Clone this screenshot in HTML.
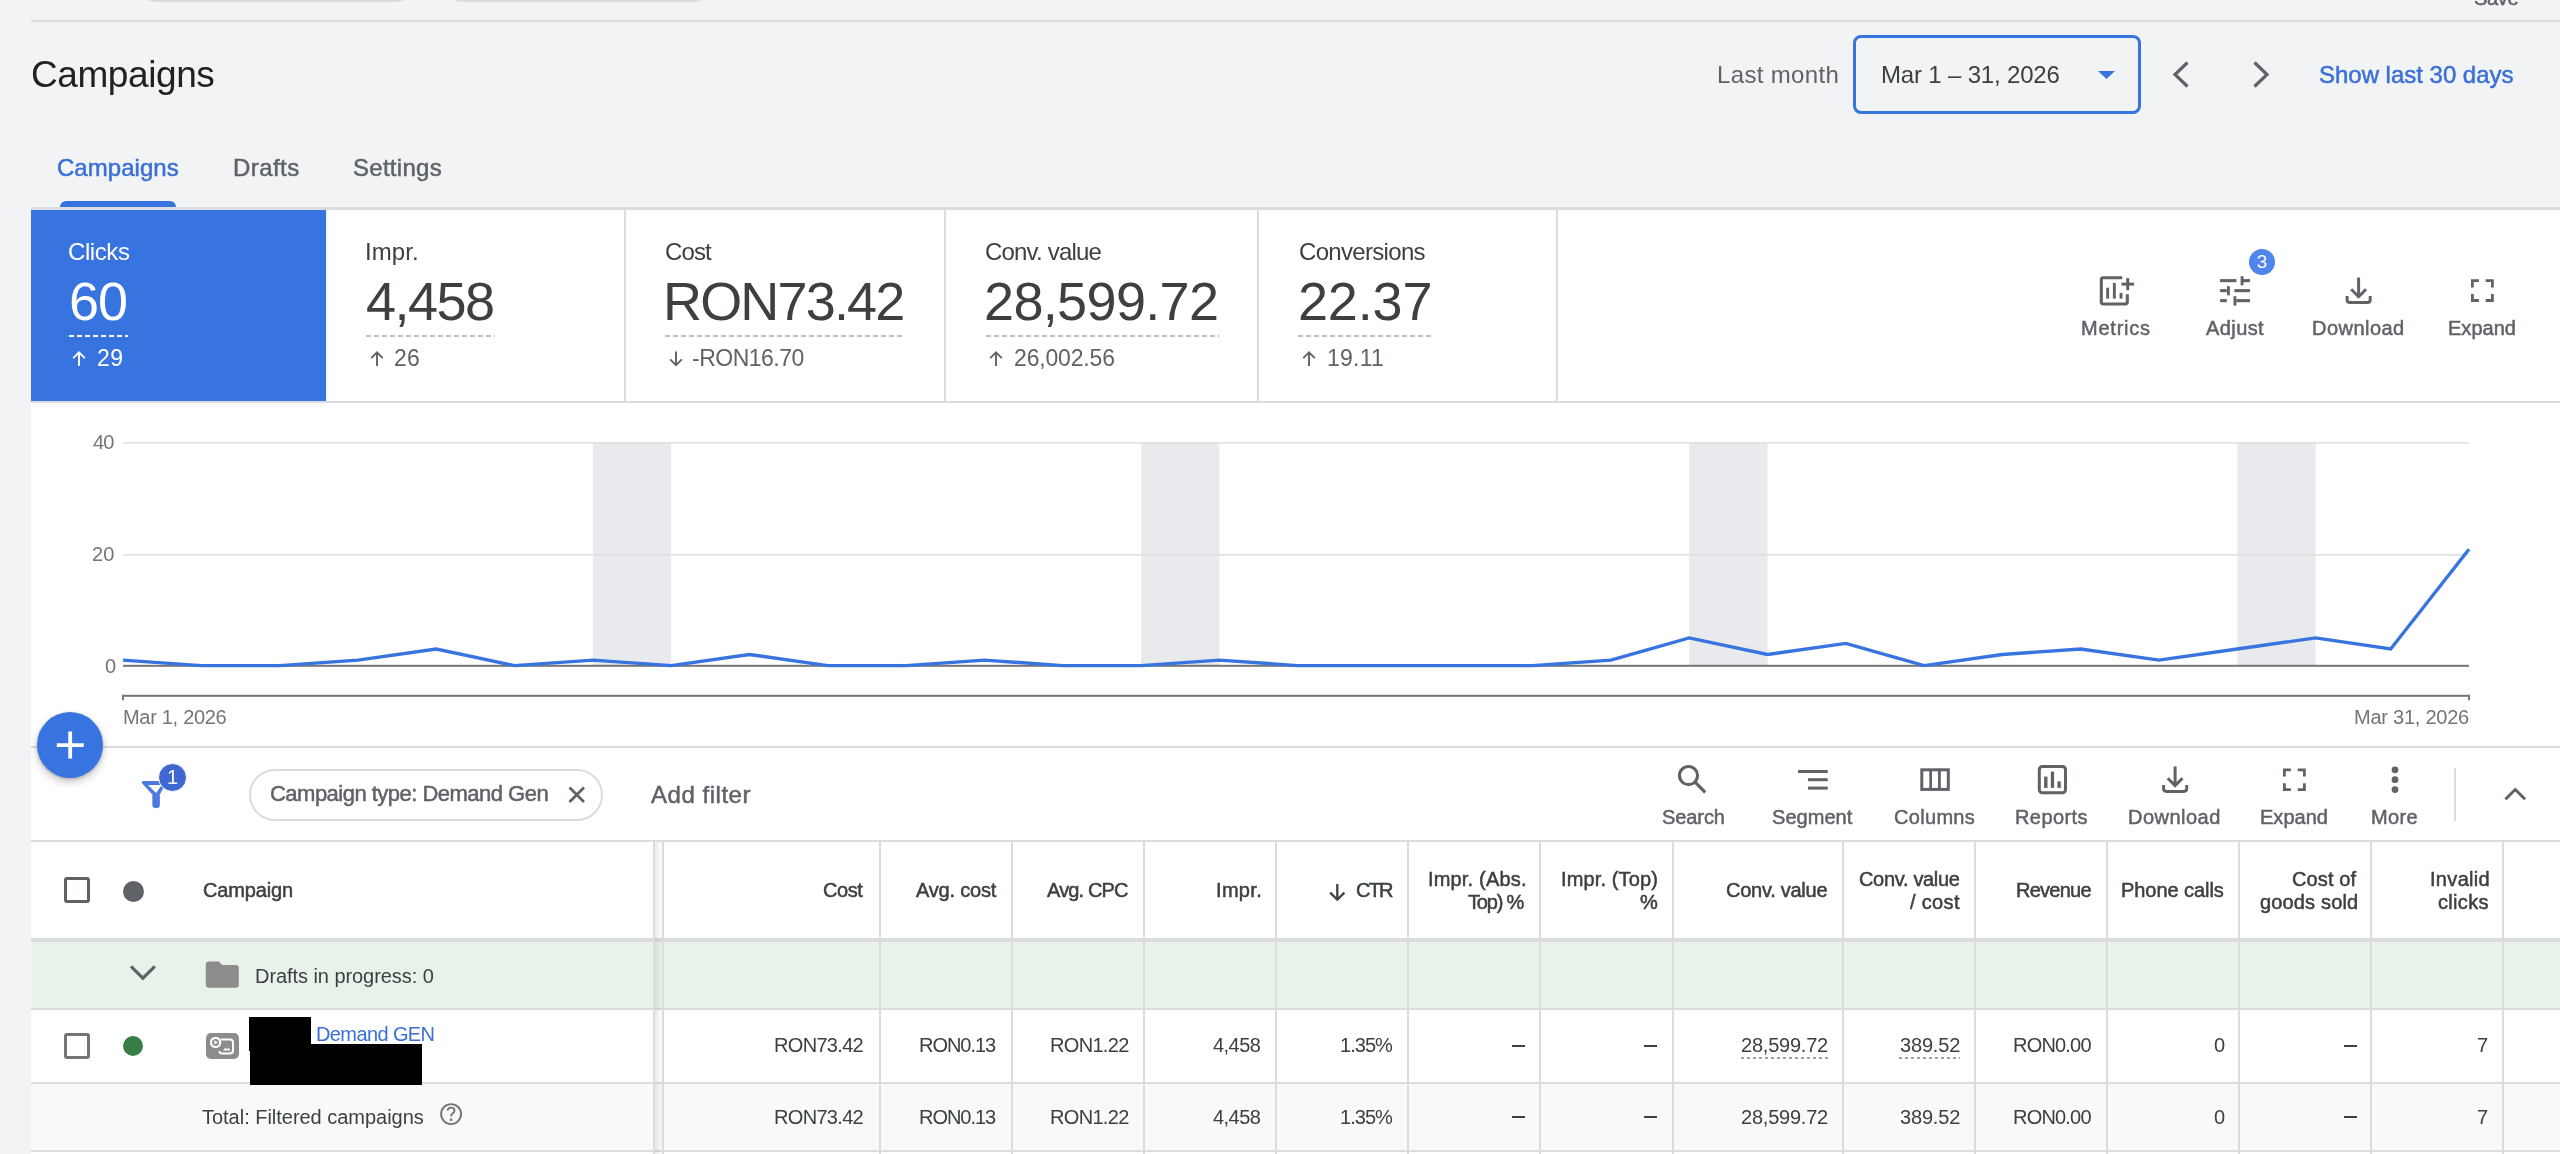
<!DOCTYPE html>
<html><head><meta charset="utf-8"><title>Campaigns</title>
<style>
html,body{margin:0;padding:0;}
body{width:2560px;height:1154px;overflow:hidden;position:relative;background:#f1f3f4;font-family:'Liberation Sans', sans-serif;-webkit-font-smoothing:antialiased;}
div{will-change:transform}
svg{overflow:visible}
</style></head><body>
<div style="position:absolute;left:139px;top:-40px;width:274px;height:42px;border:2px solid #dadce0;border-radius:16px;box-sizing:border-box;"></div>
<div style="position:absolute;left:446px;top:-40px;width:264px;height:42px;border:2px solid #dadce0;border-radius:16px;box-sizing:border-box;"></div>
<div style="position:absolute;left:2473.75px;top:-12px;font-size:20px;line-height:20px;color:#5f6368;letter-spacing:-0.300px;white-space:nowrap;-webkit-text-stroke:0.5px #5f6368;">Save</div>
<div style="position:absolute;left:31px;top:20px;width:2529px;height:2px;background:#dadce0"></div>
<div style="position:absolute;left:30.70px;top:56px;font-size:37px;line-height:37px;color:#202124;letter-spacing:-0.419px;white-space:nowrap;">Campaigns</div>
<div style="position:absolute;left:1717.00px;top:63px;font-size:24px;line-height:24px;color:#5f6368;letter-spacing:0.346px;white-space:nowrap;">Last month</div>
<div style="position:absolute;left:1853px;top:35px;width:288px;height:79px;border:3px solid #3874df;border-radius:8px;box-sizing:border-box;"></div>
<div style="position:absolute;left:1880.70px;top:63px;font-size:24px;line-height:24px;color:#3c4043;letter-spacing:-0.174px;white-space:nowrap;">Mar 1 – 31, 2026</div>
<svg style="position:absolute;left:2098px;top:71px;" width="17" height="8" viewBox="2098 71 17 8"><path d="M2098 71H2115L2106.5 79Z" fill="#3874df"/></svg>
<svg style="position:absolute;left:2165px;top:55px;" width="30" height="38" viewBox="2165 55 30 38"><path d="M2187.5 62.5L2175 74.5L2187.5 86.5" fill="none" stroke="#5f6368" stroke-width="3.2"/></svg>
<svg style="position:absolute;left:2245px;top:55px;" width="30" height="38" viewBox="2245 55 30 38"><path d="M2254.5 62.5L2267 74.5L2254.5 86.5" fill="none" stroke="#5f6368" stroke-width="3.2"/></svg>
<div style="position:absolute;left:2319.25px;top:63px;font-size:24px;line-height:24px;color:#3a6fd8;letter-spacing:-0.017px;white-space:nowrap;-webkit-text-stroke:0.5px #3a6fd8;">Show last 30 days</div>
<div style="position:absolute;left:56.95px;top:155.5px;font-size:24px;line-height:24px;color:#3a6fd8;letter-spacing:0.038px;white-space:nowrap;-webkit-text-stroke:0.5px #3a6fd8;">Campaigns</div>
<div style="position:absolute;left:232.95px;top:155.5px;font-size:24px;line-height:24px;color:#5f6368;letter-spacing:0.438px;white-space:nowrap;-webkit-text-stroke:0.5px #5f6368;">Drafts</div>
<div style="position:absolute;left:353.25px;top:155.5px;font-size:24px;line-height:24px;color:#5f6368;letter-spacing:0.283px;white-space:nowrap;-webkit-text-stroke:0.5px #5f6368;">Settings</div>
<div style="position:absolute;left:60px;top:201px;width:116px;height:7px;background:#3874df;border-radius:6px 6px 0 0"></div>
<div style="position:absolute;left:31px;top:207px;width:2529px;height:3px;background:#dadce0"></div>
<div style="position:absolute;left:31px;top:210px;width:2529px;height:193px;background:#fff"></div>
<div style="position:absolute;left:31px;top:401px;width:2529px;height:2px;background:#dadce0"></div>
<div style="position:absolute;left:31px;top:210px;width:295px;height:191px;background:#3874df"></div>
<div style="position:absolute;left:326px;top:210px;width:2px;height:191px;background:linear-gradient(to right,rgba(0,0,0,.08),rgba(0,0,0,0))"></div>
<div style="position:absolute;left:624px;top:210px;width:2px;height:191px;background:#dadce0"></div>
<div style="position:absolute;left:944px;top:210px;width:2px;height:191px;background:#dadce0"></div>
<div style="position:absolute;left:1257px;top:210px;width:2px;height:191px;background:#dadce0"></div>
<div style="position:absolute;left:1556px;top:210px;width:2px;height:191px;background:#dadce0"></div>
<div style="position:absolute;left:68.10px;top:240.39999999999998px;font-size:24px;line-height:24px;color:#fff;letter-spacing:-0.419px;white-space:nowrap;">Clicks</div>
<div style="position:absolute;left:68.70px;top:274.2px;font-size:54px;line-height:54px;color:#fff;letter-spacing:-0.932px;white-space:nowrap;">60</div>
<div style="position:absolute;left:68.7px;top:335px;width:59.3px;height:2px;background-image:linear-gradient(to right,#fff 0 5px,transparent 5px 8px);background-size:8px 2px;"></div>
<svg style="position:absolute;left:70px;top:348px;" width="18" height="22" viewBox="70 348 18 22"><path d="M79 352.5V366M73.2 358.2L79 352.4L84.8 358.2" fill="none" stroke="#fff" stroke-width="1.9"/></svg>
<div style="position:absolute;left:96.50px;top:347px;font-size:23px;line-height:23px;color:#fff;letter-spacing:0.408px;white-space:nowrap;">29</div>
<div style="position:absolute;left:364.80px;top:240.39999999999998px;font-size:24px;line-height:24px;color:#3c4043;letter-spacing:0.056px;white-space:nowrap;">Impr.</div>
<div style="position:absolute;left:365.80px;top:274.2px;font-size:54px;line-height:54px;color:#3c4043;letter-spacing:-1.525px;white-space:nowrap;">4,458</div>
<div style="position:absolute;left:366px;top:335px;width:129px;height:2px;background-image:linear-gradient(to right,#bdc1c6 0 5px,transparent 5px 8px);background-size:8px 2px;"></div>
<svg style="position:absolute;left:368px;top:348px;" width="18" height="22" viewBox="368 348 18 22"><path d="M377 352.5V366M371.2 358.2L377 352.4L382.8 358.2" fill="none" stroke="#5f6368" stroke-width="1.9"/></svg>
<div style="position:absolute;left:394.00px;top:347px;font-size:23px;line-height:23px;color:#5f6368;letter-spacing:0.208px;white-space:nowrap;">26</div>
<div style="position:absolute;left:664.60px;top:240.39999999999998px;font-size:24px;line-height:24px;color:#3c4043;letter-spacing:-0.860px;white-space:nowrap;">Cost</div>
<div style="position:absolute;left:662.70px;top:274.2px;font-size:54px;line-height:54px;color:#3c4043;letter-spacing:-1.828px;white-space:nowrap;">RON73.42</div>
<div style="position:absolute;left:664.8px;top:335px;width:240.0px;height:2px;background-image:linear-gradient(to right,#bdc1c6 0 5px,transparent 5px 8px);background-size:8px 2px;"></div>
<svg style="position:absolute;left:666.6px;top:348px;" width="18" height="22" viewBox="666.6 348 18 22"><path d="M675.6 351.5V365M669.8000000000001 359.3L675.6 365.1L681.4 359.3" fill="none" stroke="#5f6368" stroke-width="1.9"/></svg>
<div style="position:absolute;left:692.00px;top:347px;font-size:23px;line-height:23px;color:#5f6368;letter-spacing:-0.504px;white-space:nowrap;">-RON16.70</div>
<div style="position:absolute;left:985.40px;top:240.39999999999998px;font-size:24px;line-height:24px;color:#3c4043;letter-spacing:-0.811px;white-space:nowrap;">Conv. value</div>
<div style="position:absolute;left:984.00px;top:274.2px;font-size:54px;line-height:54px;color:#3c4043;letter-spacing:-0.650px;white-space:nowrap;">28,599.72</div>
<div style="position:absolute;left:985.5px;top:335px;width:232.5px;height:2px;background-image:linear-gradient(to right,#bdc1c6 0 5px,transparent 5px 8px);background-size:8px 2px;"></div>
<svg style="position:absolute;left:987px;top:348px;" width="18" height="22" viewBox="987 348 18 22"><path d="M996 352.5V366M990.2 358.2L996 352.4L1001.8 358.2" fill="none" stroke="#5f6368" stroke-width="1.9"/></svg>
<div style="position:absolute;left:1013.80px;top:347px;font-size:23px;line-height:23px;color:#5f6368;letter-spacing:-0.166px;white-space:nowrap;">26,002.56</div>
<div style="position:absolute;left:1298.60px;top:240.39999999999998px;font-size:24px;line-height:24px;color:#3c4043;letter-spacing:-0.679px;white-space:nowrap;">Conversions</div>
<div style="position:absolute;left:1297.60px;top:274.2px;font-size:54px;line-height:54px;color:#3c4043;letter-spacing:-0.175px;white-space:nowrap;">22.37</div>
<div style="position:absolute;left:1298px;top:335px;width:133.5999999999999px;height:2px;background-image:linear-gradient(to right,#bdc1c6 0 5px,transparent 5px 8px);background-size:8px 2px;"></div>
<svg style="position:absolute;left:1300px;top:348px;" width="18" height="22" viewBox="1300 348 18 22"><path d="M1309 352.5V366M1303.2 358.2L1309 352.4L1314.8 358.2" fill="none" stroke="#5f6368" stroke-width="1.9"/></svg>
<div style="position:absolute;left:1327.00px;top:347px;font-size:23px;line-height:23px;color:#5f6368;letter-spacing:0.236px;white-space:nowrap;">19.11</div>
<div style="position:absolute;left:2080.65px;top:318.3px;font-size:20px;line-height:20px;color:#5f6368;letter-spacing:0.776px;white-space:nowrap;-webkit-text-stroke:0.5px #5f6368;">Metrics</div>
<div style="position:absolute;left:2205.65px;top:318.3px;font-size:20px;line-height:20px;color:#5f6368;letter-spacing:0.414px;white-space:nowrap;-webkit-text-stroke:0.5px #5f6368;">Adjust</div>
<div style="position:absolute;left:2312.25px;top:318.3px;font-size:20px;line-height:20px;color:#5f6368;letter-spacing:0.468px;white-space:nowrap;-webkit-text-stroke:0.5px #5f6368;">Download</div>
<div style="position:absolute;left:2447.95px;top:318.3px;font-size:20px;line-height:20px;color:#5f6368;letter-spacing:0.018px;white-space:nowrap;-webkit-text-stroke:0.5px #5f6368;">Expand</div>
<div style="position:absolute;left:31px;top:403px;width:2529px;height:344px;background:#fff"></div>
<div style="position:absolute;left:31px;top:746px;width:2529px;height:2px;background:#dadce0"></div>
<svg style="position:absolute;left:0px;top:403px;" width="2560" height="344" viewBox="0 403 2560 344"><rect x="592.9" y="443" width="78.3" height="222" fill="#e8eaed"/><rect x="1141.0" y="443" width="78.3" height="222" fill="#e8eaed"/><rect x="1689.2" y="443" width="78.3" height="222" fill="#e8eaed"/><rect x="2237.3" y="443" width="78.3" height="222" fill="#e8eaed"/><rect x="123" y="442" width="2346" height="1.6" fill="#e0e0e0"/><rect x="123" y="554" width="2346" height="1.6" fill="#e0e0e0"/><rect x="123" y="664.8" width="2346" height="2" fill="#757575"/><rect x="123" y="694.8" width="2346" height="2" fill="#757575"/><rect x="122" y="694.8" width="2" height="5.5" fill="#757575"/><rect x="2468" y="694.8" width="2" height="5.5" fill="#757575"/><polyline points="123.0,660.1 201.3,665.6 279.6,665.6 357.9,660.1 436.2,649.0 514.5,665.6 592.9,660.1 671.2,665.6 749.5,654.5 827.8,665.6 906.1,665.6 984.4,660.1 1062.7,665.6 1141.0,665.6 1219.3,660.1 1297.6,665.6 1375.9,665.6 1454.2,665.6 1532.6,665.6 1610.9,660.1 1689.2,637.9 1767.5,654.5 1845.8,643.4 1924.1,665.6 2002.4,654.5 2080.7,649.0 2159.0,660.1 2237.3,649.0 2315.6,637.9 2390.7,649.0 2469.0,549.3" fill="none" stroke="#3874df" stroke-width="3.4" stroke-linejoin="miter"/></svg>
<div style="position:absolute;left:92.80px;top:432px;font-size:20px;line-height:20px;color:#757575;letter-spacing:-0.923px;white-space:nowrap;">40</div>
<div style="position:absolute;left:91.80px;top:543.7px;font-size:20px;line-height:20px;color:#757575;letter-spacing:0.077px;white-space:nowrap;">20</div>
<div style="position:absolute;left:104.60px;top:655.6px;font-size:20px;line-height:20px;color:#757575;letter-spacing:0.000px;white-space:nowrap;">0</div>
<div style="position:absolute;left:123.00px;top:706.7px;font-size:20px;line-height:20px;color:#757575;letter-spacing:-0.301px;white-space:nowrap;">Mar 1, 2026</div>
<div style="position:absolute;left:2354.00px;top:706.7px;font-size:20px;line-height:20px;color:#757575;letter-spacing:-0.248px;white-space:nowrap;">Mar 31, 2026</div>
<div style="position:absolute;left:31px;top:748px;width:2529px;height:93px;background:#fff"></div>
<div style="position:absolute;left:31px;top:840px;width:2529px;height:2px;background:#dadce0"></div>
<div style="position:absolute;left:249px;top:769px;width:354px;height:52px;border:2px solid #dadce0;border-radius:26px;box-sizing:border-box;"></div>
<div style="position:absolute;left:269.85px;top:783px;font-size:22px;line-height:22px;color:#5f6368;letter-spacing:-0.517px;white-space:nowrap;-webkit-text-stroke:0.5px #5f6368;">Campaign type: Demand Gen</div>
<svg style="position:absolute;left:560px;top:778px;" width="34" height="34" viewBox="560 778 34 34"><path d="M569.5 787.5L584 802M584 787.5L569.5 802" stroke="#5f6368" stroke-width="2.8"/></svg>
<div style="position:absolute;left:650.85px;top:783px;font-size:24px;line-height:24px;color:#5f6368;letter-spacing:0.531px;white-space:nowrap;-webkit-text-stroke:0.5px #5f6368;">Add filter</div>
<div style="position:absolute;left:1661.85px;top:807.1px;font-size:20px;line-height:20px;color:#5f6368;letter-spacing:-0.089px;white-space:nowrap;-webkit-text-stroke:0.5px #5f6368;">Search</div>
<div style="position:absolute;left:1771.95px;top:807.1px;font-size:20px;line-height:20px;color:#5f6368;letter-spacing:0.051px;white-space:nowrap;-webkit-text-stroke:0.5px #5f6368;">Segment</div>
<div style="position:absolute;left:1893.95px;top:807.1px;font-size:20px;line-height:20px;color:#5f6368;letter-spacing:0.314px;white-space:nowrap;-webkit-text-stroke:0.5px #5f6368;">Columns</div>
<div style="position:absolute;left:2015.25px;top:807.1px;font-size:20px;line-height:20px;color:#5f6368;letter-spacing:0.412px;white-space:nowrap;-webkit-text-stroke:0.5px #5f6368;">Reports</div>
<div style="position:absolute;left:2128.25px;top:807.1px;font-size:20px;line-height:20px;color:#5f6368;letter-spacing:0.483px;white-space:nowrap;-webkit-text-stroke:0.5px #5f6368;">Download</div>
<div style="position:absolute;left:2260.45px;top:807.1px;font-size:20px;line-height:20px;color:#5f6368;letter-spacing:0.018px;white-space:nowrap;-webkit-text-stroke:0.5px #5f6368;">Expand</div>
<div style="position:absolute;left:2370.95px;top:807.1px;font-size:20px;line-height:20px;color:#5f6368;letter-spacing:0.352px;white-space:nowrap;-webkit-text-stroke:0.5px #5f6368;">More</div>
<div style="position:absolute;left:2454px;top:768px;width:2px;height:53px;background:#dadce0"></div>
<svg style="position:absolute;left:2500px;top:780px;" width="32" height="26" viewBox="2500 780 32 26"><path d="M2505.5 799.3L2515.3 789.5L2525.1 799.3" fill="none" stroke="#5f6368" stroke-width="3"/></svg>
<div style="position:absolute;left:37px;top:712px;width:66px;height:66px;border-radius:50%;background:#3874df;box-shadow:0 4px 8px rgba(0,0,0,.22),0 1px 3px rgba(0,0,0,.2)"></div>
<svg style="position:absolute;left:50px;top:725px;" width="40" height="40" viewBox="50 725 40 40"><path d="M70.2 731.6V758.5M56.8 745.1H83.7" stroke="#fff" stroke-width="3.8"/></svg>
<div style="position:absolute;left:31px;top:842px;width:2529px;height:312px;background:#fff"></div>
<div style="position:absolute;left:31px;top:938px;width:2529px;height:4px;background:#dadce0"></div>
<div style="position:absolute;left:31px;top:942px;width:2529px;height:66px;background:#e8f2e9"></div>
<div style="position:absolute;left:31px;top:1008px;width:2529px;height:2px;background:#dadce0"></div>
<div style="position:absolute;left:31px;top:1082px;width:2529px;height:2px;background:#dadce0"></div>
<div style="position:absolute;left:31px;top:1084px;width:2529px;height:66px;background:#f8f9fa"></div>
<div style="position:absolute;left:31px;top:1150px;width:2529px;height:2px;background:#dadce0"></div>
<div style="position:absolute;left:653px;top:842px;width:2px;height:312px;background:#dadce0"></div>
<div style="position:absolute;left:655px;top:842px;width:7px;height:312px;background:linear-gradient(to right,rgba(0,0,0,.07),rgba(0,0,0,.01))"></div>
<div style="position:absolute;left:662px;top:842px;width:2px;height:312px;background:#dadce0"></div>
<div style="position:absolute;left:879px;top:842px;width:2px;height:312px;background:#dadce0"></div>
<div style="position:absolute;left:1011px;top:842px;width:2px;height:312px;background:#dadce0"></div>
<div style="position:absolute;left:1143px;top:842px;width:2px;height:312px;background:#dadce0"></div>
<div style="position:absolute;left:1275px;top:842px;width:2px;height:312px;background:#dadce0"></div>
<div style="position:absolute;left:1407px;top:842px;width:2px;height:312px;background:#dadce0"></div>
<div style="position:absolute;left:1539px;top:842px;width:2px;height:312px;background:#dadce0"></div>
<div style="position:absolute;left:1672px;top:842px;width:2px;height:312px;background:#dadce0"></div>
<div style="position:absolute;left:1842px;top:842px;width:2px;height:312px;background:#dadce0"></div>
<div style="position:absolute;left:1974px;top:842px;width:2px;height:312px;background:#dadce0"></div>
<div style="position:absolute;left:2106px;top:842px;width:2px;height:312px;background:#dadce0"></div>
<div style="position:absolute;left:2238px;top:842px;width:2px;height:312px;background:#dadce0"></div>
<div style="position:absolute;left:2370px;top:842px;width:2px;height:312px;background:#dadce0"></div>
<div style="position:absolute;left:2502px;top:842px;width:2px;height:312px;background:#dadce0"></div>
<div style="position:absolute;left:64px;top:877px;width:26px;height:26px;border:3px solid #5f6368;border-radius:3px;box-sizing:border-box;"></div>
<div style="position:absolute;left:122.5px;top:880.5px;width:21px;height:21px;background:#5f6368;border-radius:50%"></div>
<div style="position:absolute;left:202.55px;top:880.3px;font-size:20px;line-height:20px;color:#3c4043;letter-spacing:-0.163px;white-space:nowrap;-webkit-text-stroke:0.5px #3c4043;">Campaign</div>
<div style="position:absolute;left:823.45px;top:880.3px;font-size:20px;line-height:20px;color:#3c4043;letter-spacing:-0.422px;white-space:nowrap;-webkit-text-stroke:0.5px #3c4043;">Cost</div>
<div style="position:absolute;left:915.65px;top:880.3px;font-size:20px;line-height:20px;color:#3c4043;letter-spacing:-0.192px;white-space:nowrap;-webkit-text-stroke:0.5px #3c4043;">Avg. cost</div>
<div style="position:absolute;left:1047.35px;top:880.3px;font-size:20px;line-height:20px;color:#3c4043;letter-spacing:-0.843px;white-space:nowrap;-webkit-text-stroke:0.5px #3c4043;">Avg. CPC</div>
<div style="position:absolute;left:1215.95px;top:880.3px;font-size:20px;line-height:20px;color:#3c4043;letter-spacing:0.326px;white-space:nowrap;-webkit-text-stroke:0.5px #3c4043;">Impr.</div>
<div style="position:absolute;left:1355.75px;top:880.3px;font-size:20px;line-height:20px;color:#3c4043;letter-spacing:-1.780px;white-space:nowrap;-webkit-text-stroke:0.5px #3c4043;">CTR</div>
<div style="position:absolute;left:1726.05px;top:880.3px;font-size:20px;line-height:20px;color:#3c4043;letter-spacing:-0.261px;white-space:nowrap;-webkit-text-stroke:0.5px #3c4043;">Conv. value</div>
<div style="position:absolute;left:2016.15px;top:880.3px;font-size:20px;line-height:20px;color:#3c4043;letter-spacing:-0.756px;white-space:nowrap;-webkit-text-stroke:0.5px #3c4043;">Revenue</div>
<div style="position:absolute;left:2121.25px;top:880.3px;font-size:20px;line-height:20px;color:#3c4043;letter-spacing:-0.060px;white-space:nowrap;-webkit-text-stroke:0.5px #3c4043;">Phone calls</div>
<div style="position:absolute;left:1427.95px;top:868.7px;font-size:20px;line-height:20px;color:#3c4043;letter-spacing:0.177px;white-space:nowrap;-webkit-text-stroke:0.5px #3c4043;">Impr. (Abs.</div>
<div style="position:absolute;left:1468.25px;top:891.6px;font-size:20px;line-height:20px;color:#3c4043;letter-spacing:-1.193px;white-space:nowrap;-webkit-text-stroke:0.5px #3c4043;">Top) %</div>
<div style="position:absolute;left:1560.65px;top:868.7px;font-size:20px;line-height:20px;color:#3c4043;letter-spacing:0.128px;white-space:nowrap;-webkit-text-stroke:0.5px #3c4043;">Impr. (Top)</div>
<div style="position:absolute;left:1639.75px;top:891.6px;font-size:20px;line-height:20px;color:#3c4043;letter-spacing:0.000px;white-space:nowrap;-webkit-text-stroke:0.5px #3c4043;">%</div>
<div style="position:absolute;left:1858.95px;top:868.7px;font-size:20px;line-height:20px;color:#3c4043;letter-spacing:-0.321px;white-space:nowrap;-webkit-text-stroke:0.5px #3c4043;">Conv. value</div>
<div style="position:absolute;left:1909.85px;top:891.6px;font-size:20px;line-height:20px;color:#3c4043;letter-spacing:0.333px;white-space:nowrap;-webkit-text-stroke:0.5px #3c4043;">/ cost</div>
<div style="position:absolute;left:2292.15px;top:868.7px;font-size:20px;line-height:20px;color:#3c4043;letter-spacing:0.133px;white-space:nowrap;-webkit-text-stroke:0.5px #3c4043;">Cost of</div>
<div style="position:absolute;left:2259.75px;top:891.6px;font-size:20px;line-height:20px;color:#3c4043;letter-spacing:0.154px;white-space:nowrap;-webkit-text-stroke:0.5px #3c4043;">goods sold</div>
<div style="position:absolute;left:2429.95px;top:868.7px;font-size:20px;line-height:20px;color:#3c4043;letter-spacing:0.318px;white-space:nowrap;-webkit-text-stroke:0.5px #3c4043;">Invalid</div>
<div style="position:absolute;left:2438.05px;top:891.6px;font-size:20px;line-height:20px;color:#3c4043;letter-spacing:0.323px;white-space:nowrap;-webkit-text-stroke:0.5px #3c4043;">clicks</div>
<svg style="position:absolute;left:1326px;top:880px;" width="22" height="24" viewBox="1326 880 22 24"><path d="M1337.3 884V899.5M1330.2 892.6L1337.3 899.7L1344.4 892.6" fill="none" stroke="#3c4043" stroke-width="2.3"/></svg>
<svg style="position:absolute;left:126px;top:960px;" width="34" height="26" viewBox="126 960 34 26"><path d="M131 966.3L142.9 978.2L154.8 966.3" fill="none" stroke="#5f6368" stroke-width="3.2"/></svg>
<svg style="position:absolute;left:204px;top:959px;" width="38" height="31" viewBox="204 959 38 31"><path d="M208.8 961.4H218.8L222.1 965H235.8Q238.8 965 238.8 968V984.8Q238.8 987.8 235.8 987.8H208.8Q205.8 987.8 205.8 984.8V964.4Q205.8 961.4 208.8 961.4Z" fill="#8c8c8c"/></svg>
<div style="position:absolute;left:254.90px;top:965.6px;font-size:20px;line-height:20px;color:#3c4043;letter-spacing:-0.062px;white-space:nowrap;">Drafts in progress: 0</div>
<div style="position:absolute;left:64px;top:1033px;width:26px;height:26px;border:3px solid #757575;border-radius:3px;box-sizing:border-box;"></div>
<div style="position:absolute;left:123px;top:1036px;width:20px;height:20px;background:#387e48;border-radius:50%"></div>
<div style="position:absolute;left:206px;top:1033px;width:33px;height:26px;background:#8c8c8c;border-radius:5px"></div>
<svg style="position:absolute;left:206px;top:1033px;" width="33" height="26" viewBox="206 1033 33 26"><circle cx="215.6" cy="1042.4" r="4.6" fill="none" stroke="#fff" stroke-width="2.2"/><path d="M214.3 1040.2L218 1042.4L214.3 1044.6Z" fill="#fff"/><path d="M221 1039.5H230Q233 1039.5 233 1042.5V1050.5Q233 1053.5 230 1053.5H222Q219.5 1053.5 219.5 1051" fill="none" stroke="#fff" stroke-width="2"/><path d="M223 1050.5L225.5 1047.5L227 1049.5L228.5 1047.5L230.5 1050.5Z" fill="#fff"/></svg>
<div style="position:absolute;left:249px;top:1017px;width:62px;height:34px;background:#000"></div>
<div style="position:absolute;left:250px;top:1044px;width:172px;height:41px;background:#000"></div>
<div style="position:absolute;left:316.00px;top:1024px;font-size:20px;line-height:20px;color:#3a6fd8;letter-spacing:-0.605px;white-space:nowrap;">Demand GEN</div>
<div style="position:absolute;left:774.40px;top:1035.2px;font-size:20px;line-height:20px;color:#3c4043;letter-spacing:-0.681px;white-space:nowrap;">RON73.42</div>
<div style="position:absolute;left:918.90px;top:1035.2px;font-size:20px;line-height:20px;color:#3c4043;letter-spacing:-1.024px;white-space:nowrap;">RON0.13</div>
<div style="position:absolute;left:1049.50px;top:1035.2px;font-size:20px;line-height:20px;color:#3c4043;letter-spacing:-0.674px;white-space:nowrap;">RON1.22</div>
<div style="position:absolute;left:1212.70px;top:1035.2px;font-size:20px;line-height:20px;color:#3c4043;letter-spacing:-0.556px;white-space:nowrap;">4,458</div>
<div style="position:absolute;left:1340.00px;top:1035.2px;font-size:20px;line-height:20px;color:#3c4043;letter-spacing:-0.956px;white-space:nowrap;">1.35%</div>
<div style="position:absolute;left:1740.60px;top:1035.2px;font-size:20px;line-height:20px;color:#3c4043;letter-spacing:-0.219px;white-space:nowrap;">28,599.72</div>
<div style="position:absolute;left:1899.80px;top:1035.2px;font-size:20px;line-height:20px;color:#3c4043;letter-spacing:-0.170px;white-space:nowrap;">389.52</div>
<div style="position:absolute;left:2013.40px;top:1035.2px;font-size:20px;line-height:20px;color:#3c4043;letter-spacing:-0.808px;white-space:nowrap;">RON0.00</div>
<div style="position:absolute;left:2213.80px;top:1035.2px;font-size:20px;line-height:20px;color:#3c4043;letter-spacing:0.000px;white-space:nowrap;">0</div>
<div style="position:absolute;left:2476.50px;top:1035.2px;font-size:20px;line-height:20px;color:#3c4043;letter-spacing:0.000px;white-space:nowrap;">7</div>
<div style="position:absolute;left:774.40px;top:1106.6px;font-size:20px;line-height:20px;color:#3c4043;letter-spacing:-0.681px;white-space:nowrap;">RON73.42</div>
<div style="position:absolute;left:918.90px;top:1106.6px;font-size:20px;line-height:20px;color:#3c4043;letter-spacing:-1.024px;white-space:nowrap;">RON0.13</div>
<div style="position:absolute;left:1049.50px;top:1106.6px;font-size:20px;line-height:20px;color:#3c4043;letter-spacing:-0.674px;white-space:nowrap;">RON1.22</div>
<div style="position:absolute;left:1212.70px;top:1106.6px;font-size:20px;line-height:20px;color:#3c4043;letter-spacing:-0.556px;white-space:nowrap;">4,458</div>
<div style="position:absolute;left:1340.00px;top:1106.6px;font-size:20px;line-height:20px;color:#3c4043;letter-spacing:-0.956px;white-space:nowrap;">1.35%</div>
<div style="position:absolute;left:1740.60px;top:1106.6px;font-size:20px;line-height:20px;color:#3c4043;letter-spacing:-0.219px;white-space:nowrap;">28,599.72</div>
<div style="position:absolute;left:1899.80px;top:1106.6px;font-size:20px;line-height:20px;color:#3c4043;letter-spacing:-0.170px;white-space:nowrap;">389.52</div>
<div style="position:absolute;left:2013.40px;top:1106.6px;font-size:20px;line-height:20px;color:#3c4043;letter-spacing:-0.808px;white-space:nowrap;">RON0.00</div>
<div style="position:absolute;left:2213.80px;top:1106.6px;font-size:20px;line-height:20px;color:#3c4043;letter-spacing:0.000px;white-space:nowrap;">0</div>
<div style="position:absolute;left:2476.50px;top:1106.6px;font-size:20px;line-height:20px;color:#3c4043;letter-spacing:0.000px;white-space:nowrap;">7</div>
<div style="position:absolute;left:1511.7px;top:1044.6px;width:12.7px;height:1.9px;background:#3c4043"></div>
<div style="position:absolute;left:1511.7px;top:1116.0px;width:12.7px;height:1.9px;background:#3c4043"></div>
<div style="position:absolute;left:1644px;top:1044.6px;width:12.6px;height:1.9px;background:#3c4043"></div>
<div style="position:absolute;left:1644px;top:1116.0px;width:12.6px;height:1.9px;background:#3c4043"></div>
<div style="position:absolute;left:2343.5px;top:1044.6px;width:12.7px;height:1.9px;background:#3c4043"></div>
<div style="position:absolute;left:2343.5px;top:1116.0px;width:12.7px;height:1.9px;background:#3c4043"></div>
<div style="position:absolute;left:1741px;top:1057px;width:87px;height:1.5px;background-image:linear-gradient(to right,#a0a4a8 0 3px,transparent 3px 6px);background-size:6px 2px;"></div>
<div style="position:absolute;left:1899px;top:1057px;width:61px;height:1.5px;background-image:linear-gradient(to right,#a0a4a8 0 3px,transparent 3px 6px);background-size:6px 2px;"></div>
<div style="position:absolute;left:202.00px;top:1106.5px;font-size:20px;line-height:20px;color:#3c4043;letter-spacing:-0.022px;white-space:nowrap;">Total: Filtered campaigns</div>
<svg style="position:absolute;left:436px;top:1099px;" width="30" height="30" viewBox="436 1099 30 30"><circle cx="451.1" cy="1114.1" r="10" fill="none" stroke="#757575" stroke-width="1.9"/><path d="M447.6 1110.6Q447.8 1107.6 451.1 1107.6Q454.5 1107.6 454.5 1110.6Q454.5 1112.3 452.6 1113.5Q451.1 1114.5 451.1 1116.5" fill="none" stroke="#757575" stroke-width="1.9"/><rect x="449.9" y="1118.5" width="2.4" height="2.4" fill="#757575"/></svg>
<svg style="position:absolute;left:136px;top:770px;" width="40" height="42" viewBox="136 770 40 42"><path d="M142.6 781.6H166L159.3 794.6V805.6Q159.3 807.6 157.3 807.6H154.9Q152.9 807.6 152.9 805.6V794.6L142.6 783.4Z" fill="#4a79e0" stroke="#4a79e0" stroke-width="1" stroke-linejoin="round"/><path d="M147.9 784.9H161.6L156.1 792.9Z" fill="#fff"/></svg>
<div style="position:absolute;left:157.8px;top:763.3px;width:27px;height:27px;border-radius:50%;background:#3f67d0;border:1.5px solid #fff;color:#fff;font-size:20px;line-height:27px;text-align:center">1</div>
<div style="position:absolute;left:2248.6px;top:249.2px;width:26.2px;height:26.2px;border-radius:50%;background:#5086ec;color:#fff;font-size:19px;line-height:26px;text-align:center">3</div>
<svg style="position:absolute;left:1600px;top:250px;" width="960" height="560" viewBox="1600 250 960 560"><path d="M2122.2 277.7H2103.2Q2101.3 277.7 2101.3 279.6V302.1Q2101.3 304 2103.2 304H2125.4Q2127.3 304 2127.3 302.1V294.3" fill="none" stroke="#5f6368" stroke-width="3.1"/><rect x="2126.2" y="278.1" width="3" height="12.1" fill="#5f6368"/><rect x="2121.5" y="282.6" width="12.6" height="3" fill="#5f6368"/><rect x="2106.2" y="287.7" width="2.9" height="10.9" fill="#5f6368"/><rect x="2112.9" y="282.9" width="2.9" height="15.7" fill="#5f6368"/><rect x="2119.6" y="292.9" width="2.9" height="5.7" fill="#5f6368"/><rect x="2220.1" y="279.1" width="16.3" height="3.1" fill="#5f6368"/><rect x="2243" y="279.1" width="7.0" height="3.1" fill="#5f6368"/><rect x="2220.1" y="289.1" width="6.7" height="3.1" fill="#5f6368"/><rect x="2234.4" y="289.1" width="15.6" height="3.1" fill="#5f6368"/><rect x="2220.1" y="299.1" width="6.7" height="3.1" fill="#5f6368"/><rect x="2236.4" y="299.1" width="13.6" height="3.1" fill="#5f6368"/><rect x="2240.6" y="276.2" width="2.9" height="9.1" fill="#5f6368"/><rect x="2227.0" y="286.2" width="2.9" height="9.1" fill="#5f6368"/><rect x="2233.5" y="296.2" width="2.9" height="9.4" fill="#5f6368"/><g transform="translate(0,0)"><rect x="2357.1" y="277.5" width="3" height="18" fill="#5f6368"/><path d="M2351.2 289.3L2358.6 296.7L2366 289.3" fill="none" stroke="#5f6368" stroke-width="3"/><path d="M2347.1 296V299.7Q2347.1 302.5 2349.9 302.5H2367.4Q2370.2 302.5 2370.2 299.7V296" fill="none" stroke="#5f6368" stroke-width="3"/></g><g transform="translate(0,0)" fill="none" stroke="#5f6368" stroke-width="2.8"><path d="M2472.4 287.4V280.6H2478.9"/><path d="M2485.7 280.6H2492.4V287.4"/><path d="M2472.4 294V300.5H2478.9"/><path d="M2485.7 300.5H2492.4V294"/></g><circle cx="1688.5" cy="775.6" r="9.05" fill="none" stroke="#5f6368" stroke-width="3.1"/><path d="M1694.8 781.9L1705.2 792.3" stroke="#5f6368" stroke-width="3.3"/><rect x="1798" y="770" width="29.7" height="3" fill="#5f6368"/><rect x="1808" y="778.2" width="19.7" height="3" fill="#5f6368"/><rect x="1808" y="786.6" width="19.7" height="3" fill="#5f6368"/><rect x="1921.8" y="769.8" width="26.5" height="19.6" fill="none" stroke="#5f6368" stroke-width="3"/><rect x="1929.3" y="769" width="2.7" height="21" fill="#5f6368"/><rect x="1938" y="769" width="2.8" height="21" fill="#5f6368"/><rect x="2039.3" y="766.5" width="26.2" height="26.2" rx="3" fill="none" stroke="#5f6368" stroke-width="3"/><rect x="2044.1" y="776.6" width="3.4" height="11.3" fill="#5f6368"/><rect x="2050.8" y="771.6" width="3.3" height="16.3" fill="#5f6368"/><rect x="2057.4" y="781.4" width="3.4" height="6.5" fill="#5f6368"/><g transform="translate(-183.5,488.9)"><rect x="2357.1" y="277.5" width="3" height="18" fill="#5f6368"/><path d="M2351.2 289.3L2358.6 296.7L2366 289.3" fill="none" stroke="#5f6368" stroke-width="3"/><path d="M2347.1 296V299.7Q2347.1 302.5 2349.9 302.5H2367.4Q2370.2 302.5 2370.2 299.7V296" fill="none" stroke="#5f6368" stroke-width="3"/></g><g transform="translate(-188.0,489.2)" fill="none" stroke="#5f6368" stroke-width="2.8"><path d="M2472.4 287.4V280.6H2478.9"/><path d="M2485.7 280.6H2492.4V287.4"/><path d="M2472.4 294V300.5H2478.9"/><path d="M2485.7 300.5H2492.4V294"/></g><circle cx="2395" cy="769.8" r="3.4" fill="#5f6368"/><circle cx="2395" cy="779.7" r="3.4" fill="#5f6368"/><circle cx="2395" cy="789.6" r="3.4" fill="#5f6368"/></svg>
</body></html>
